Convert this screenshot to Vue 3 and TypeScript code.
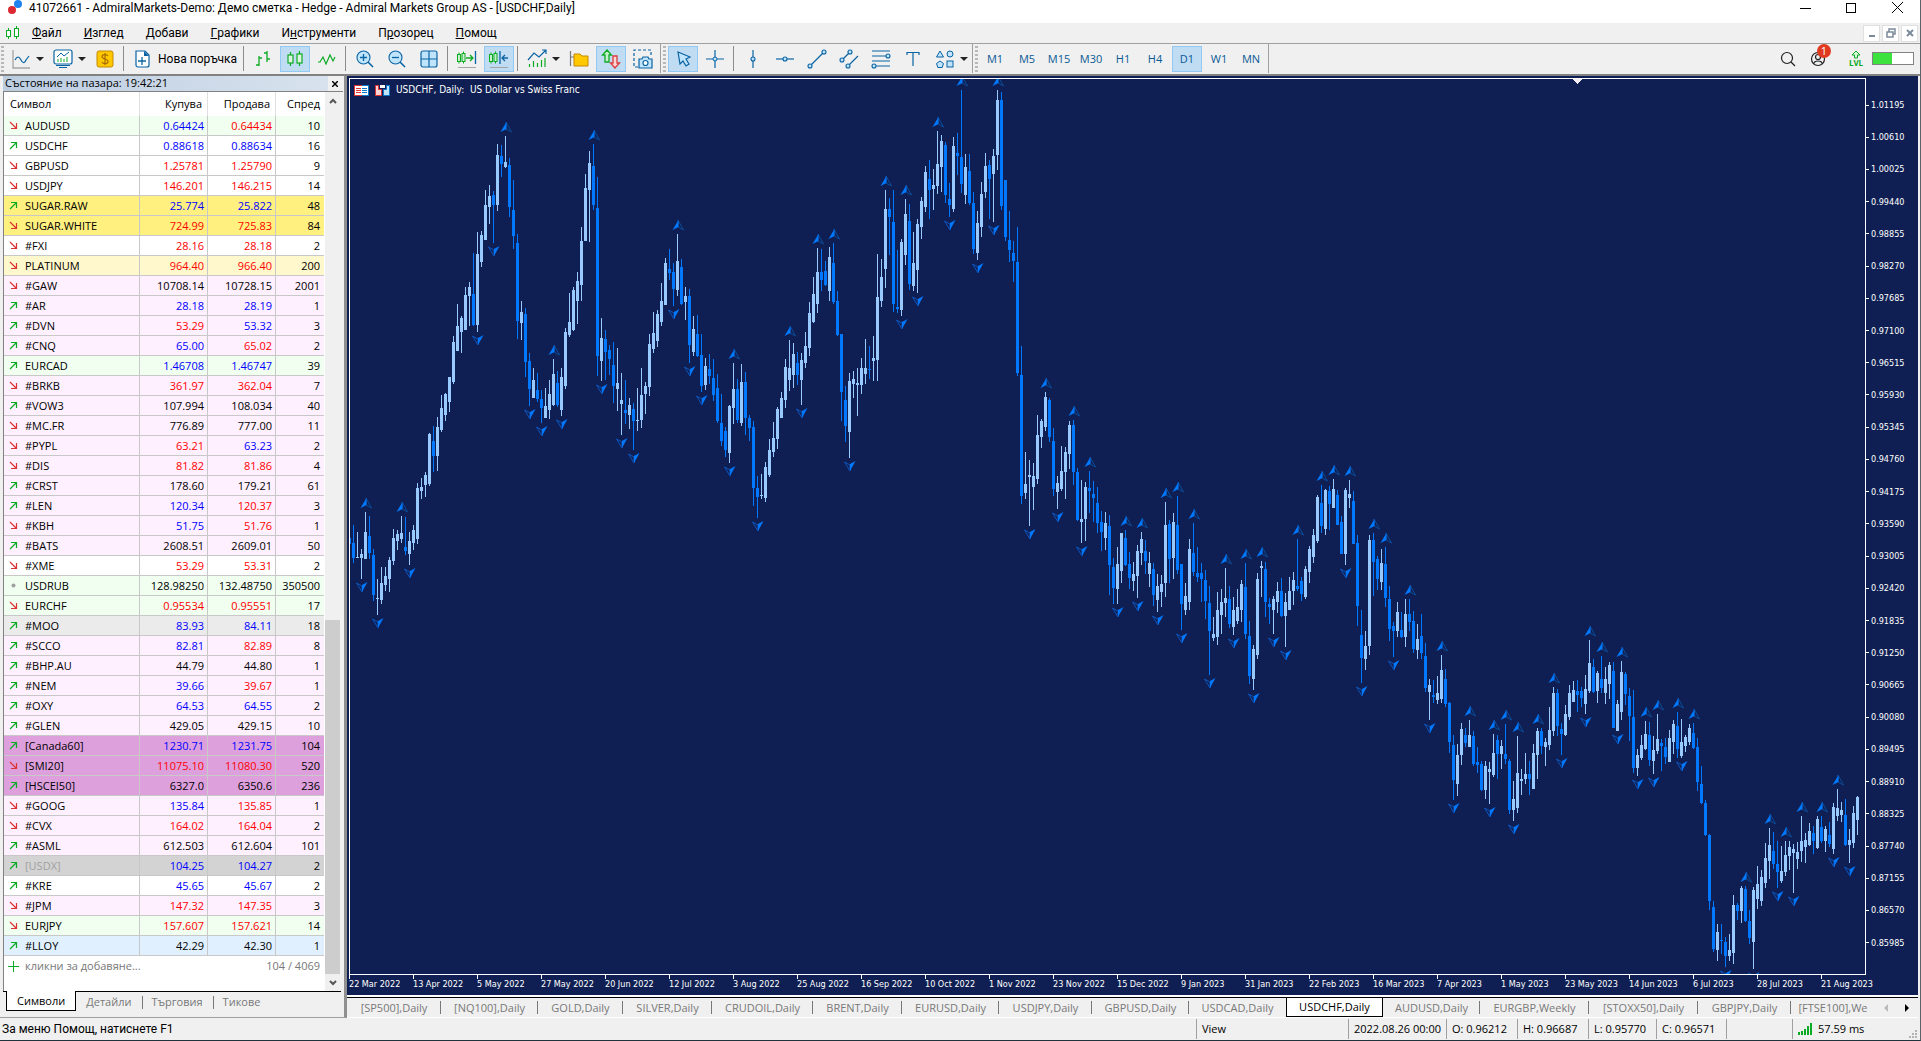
<script setup lang="ts">
type Trend = 'up' | 'down' | 'flat'
type Tone = 'b' | 'r' | 'k'

interface Quote {
  trend: Trend
  symbol: string
  bid: string
  ask: string
  tones: [Tone, Tone]
  spread: string
  bg: string
}

interface Bar {
  up: boolean
  high: number
  top: number
  bottom: number
  low: number
}

interface Tool {
  icon: string
  label: string
  caret?: boolean
  on?: boolean
  text?: string
}

const menus = [
  ['', 'Ф', 'айл'],
  ['', 'И', 'зглед'],
  ['', 'Д', 'обави'],
  ['', 'Г', 'рафики'],
  ['И', 'н', 'струменти'],
  ['П', 'р', 'озорец'],
  ['', 'П', 'омощ'],
]

const B = '#0a64a4'
const L = '#bfe4fb'
const G = '#0cab24'

const icons: Record<string, string> = {
  chart: `<path d="M2 1v18h17" fill="none" stroke="#a5a5a5" stroke-width="1.300"/><path d="M4 11c2-4 4-4 6 0s4 3 5 0l3-4" fill="none" stroke="${B}" stroke-width="1.200"/>`,
  profile: `<rect x="1" y="1" width="18" height="14" rx="2" fill="#fff" stroke="${B}" stroke-width="1.200"/><path d="M3 16.500h14M6 18.500h8" stroke="${B}" stroke-width="1.200"/><path d="M4 8l4-4 3 3 5-4" fill="none" stroke="${B}"/><path d="M5 13v-3M8 13V9M11 13v-3M14 13V8" stroke="${G}"/>`,
  dollar: `<rect x="2" y="2" width="16" height="16" rx="2" fill="#ffc800" stroke="#c48a00"/><path d="M13 7c-1-2-6-2-6 .6 0 3 6 1.800 6 4.800 0 2.800-5 3-6 .6M10 4v12" fill="none" stroke="#a86e00" stroke-width="1.200"/>`,
  order: `<path d="M4 2h9l4 4v10a2 2 0 0 1-2 2H6a2 2 0 0 1-2-2z" fill="#fff" stroke="${B}" stroke-width="1.200"/><path d="M12 2v5h5z" fill="${B}"/><path d="M6 12h8M10 8v8" stroke="${B}" stroke-width="1.300"/>`,
  bars: `<path d="M6 7v10M3 16h3M6 9h3M14 2v11M11 4h3M14 10h3" fill="none" stroke="${G}" stroke-width="1.300"/>`,
  candles: `<path d="M5.500 3v3M5.500 14v3M14.500 2v3M14.500 14v3" stroke="${G}" stroke-width="1.200"/><rect x="3" y="6" width="5" height="8" fill="#dff5df" stroke="${G}" stroke-width="1.200"/><rect x="12" y="5" width="5" height="9" fill="#dff5df" stroke="${G}" stroke-width="1.200"/>`,
  line: `<path d="M1 13h2l3-5 3 7 4-9 3 6 2-4" fill="none" stroke="${G}" stroke-width="1.200"/>`,
  zoomIn: `<path d="M13 13l5 5" stroke="${B}" stroke-width="1.600"/><circle cx="8.500" cy="8.500" r="6.500" fill="${L}" stroke="${B}" stroke-width="1.100"/><path d="M5 8.500h7M8.500 5v7" stroke="${B}" stroke-width="1.300"/>`,
  zoomOut: `<path d="M13 13l5 5" stroke="${B}" stroke-width="1.600"/><circle cx="8.500" cy="8.500" r="6.500" fill="${L}" stroke="${B}" stroke-width="1.100"/><path d="M5 8.500h7" stroke="${B}" stroke-width="1.300"/>`,
  grid: `<rect x="2" y="2" width="16" height="16" rx="2" fill="${L}" stroke="${B}" stroke-width="1.200"/><path d="M10 2v16M2 10h16" stroke="${B}" stroke-width="1.200"/>`,
  scroll: `<path d="M2 3.500v11M6.500 2.500v12" stroke="${G}"/><rect x="0.500" y="5.500" width="3" height="7" fill="#c9f0cd" stroke="${G}"/><rect x="5" y="4.500" width="3" height="8" fill="#c9f0cd" stroke="${G}"/><path d="M9 9h7M13 6l3 3-3 3" fill="none" stroke="${G}" stroke-width="1.300"/><path d="M18.500 2v13" stroke="${B}" stroke-width="1.300"/><path d="M1 18.500h18" stroke="#a5a5a5"/>`,
  shift: `<path d="M2 3.500v11M6.500 2.500v12" stroke="${G}"/><rect x="0.500" y="5.500" width="3" height="7" fill="#c9f0cd" stroke="${G}"/><rect x="5" y="4.500" width="3" height="8" fill="#c9f0cd" stroke="${G}"/><path d="M11 2v13M19 9h-6M16 6l-3 3 3 3" fill="none" stroke="${B}" stroke-width="1.300"/><path d="M1 18.500h18" stroke="#a5a5a5"/>`,
  indicators: `<path d="M1 11l6-7 5 4 7-7M15 1h4v4" fill="none" stroke="${B}" stroke-width="1.200"/><path d="M2.500 18v-3M6.500 18v-6M10.500 18v-4M14.500 18v-7M18 18v-9" stroke="${G}" stroke-width="1.200"/>`,
  folder: `<path d="M1.500 2v15M1.500 8h4" stroke="#777" stroke-width="1.200"/><path d="M5 5h6l2 2h6v10H5z" fill="#ffc800" stroke="#c48a00"/>`,
  trade: `<path d="M6 1l4.500 5H8v7H4V6H1.500z" fill="#c9f0cd" stroke="${G}" stroke-width="1.300"/><path d="M14 19l-4.500-5H12V7h4v7h2.500z" fill="#ffd4d2" stroke="#dc3c3c" stroke-width="1.300"/>`,
  camera: `<path d="M5 18H1V1h17v6" fill="none" stroke="${B}" stroke-width="1.200" stroke-dasharray="3 2"/><path d="M6 10h3l1-2h5l1 2h3v9H6z" fill="${L}" stroke="${B}" stroke-width="1.200"/><circle cx="12.500" cy="14" r="2.500" fill="#fff" stroke="${B}" stroke-width="1.200"/>`,
  cursor: `<path d="M5 3l12 5-4 2 3 5-3 2-3-5-3 3z" fill="${L}" stroke="${B}" stroke-width="1.200"/>`,
  cross: `<path d="M10 1v18M1 10h18" stroke="${B}" stroke-width="1.200"/><circle cx="10" cy="10" r="2" fill="${L}" stroke="${B}"/>`,
  vline: `<path d="M10 1v18" stroke="${B}" stroke-width="1.200"/><circle cx="10" cy="10" r="2" fill="${L}" stroke="${B}" stroke-width="1.100"/>`,
  hline: `<path d="M1 10h18" stroke="${B}" stroke-width="1.200"/><circle cx="10" cy="10" r="2" fill="${L}" stroke="${B}" stroke-width="1.100"/>`,
  trendline: `<path d="M3 17L17 3" stroke="${B}" stroke-width="1.200"/><circle cx="3" cy="17" r="2" fill="${L}" stroke="${B}" stroke-width="1.100"/><circle cx="17" cy="3" r="2" fill="${L}" stroke="${B}" stroke-width="1.100"/>`,
  channel: `<path d="M3 11l8-8M9 17L19 7" stroke="${B}" stroke-width="1.200"/><circle cx="3" cy="11" r="2" fill="${L}" stroke="${B}" stroke-width="1.100"/><circle cx="11" cy="3" r="2" fill="${L}" stroke="${B}" stroke-width="1.100"/><circle cx="9" cy="17" r="2" fill="${L}" stroke="${B}" stroke-width="1.100"/>`,
  fibo: `<path d="M1 2h18M1 7h14M1 12h18M5 17h14" stroke="${B}" stroke-width="1.200"/><circle cx="17" cy="7" r="2" fill="${L}" stroke="${B}" stroke-width="1.100"/><circle cx="3" cy="17" r="2" fill="${L}" stroke="${B}" stroke-width="1.100"/>`,
  label: `<path d="M4 6V3.500h12V6M10 4v13" fill="none" stroke="${B}" stroke-width="1.200"/>`,
  shapes: `<path d="M5 2l3.500 6h-7z" fill="${L}" stroke="${B}"/><circle cx="15" cy="5" r="3" fill="${L}" stroke="${B}"/><path d="M5 12l3.500 2.500-1.300 4H2.800l-1.300-4z" fill="${L}" stroke="${B}"/><rect x="12" y="12" width="6" height="6" fill="${L}" stroke="${B}"/>`,
}

const toolGroups: Tool[][] = [
  [
    { icon: 'chart', label: 'Нова графика', caret: true },
    { icon: 'profile', label: 'Профили', caret: true },
    { icon: 'dollar', label: 'Символи' },
  ],
  [{ icon: 'order', label: 'Нова поръчка', text: 'Нова поръчка' }],
  [
    { icon: 'bars', label: 'Барове' },
    { icon: 'candles', label: 'Свещи', on: true },
    { icon: 'line', label: 'Линия' },
  ],
  [
    { icon: 'zoomIn', label: 'Увеличи' },
    { icon: 'zoomOut', label: 'Намали' },
    { icon: 'grid', label: 'Подреди' },
  ],
  [
    { icon: 'scroll', label: 'Автопревъртане' },
    { icon: 'shift', label: 'Отместване', on: true },
  ],
  [
    { icon: 'indicators', label: 'Индикатори', caret: true },
    { icon: 'folder', label: 'Обекти' },
    { icon: 'trade', label: 'Търговия', on: true },
    { icon: 'camera', label: 'Снимка' },
  ],
]

const pointerTools: Tool[] = [
  { icon: 'cursor', label: 'Курсор', on: true },
  { icon: 'cross', label: 'Кръст' },
]

const drawTools: Tool[] = [
  { icon: 'vline', label: 'Вертикална линия' },
  { icon: 'hline', label: 'Хоризонтална линия' },
  { icon: 'trendline', label: 'Тренд' },
  { icon: 'channel', label: 'Канал' },
  { icon: 'fibo', label: 'Фибоначи' },
  { icon: 'label', label: 'Текст' },
  { icon: 'shapes', label: 'Фигури', caret: true },
]

const periods = ['M1', 'M5', 'M15', 'M30', 'H1', 'H4', 'D1', 'W1', 'MN']

const trendKey: Record<string, Trend> = { '+': 'up', '-': 'down', '.': 'flat' }

const quotes: Quote[] = `
- AUDUSD 0.64424 0.64434 br 10 mint
+ USDCHF 0.88618 0.88634 bb 16 white
- GBPUSD 1.25781 1.25790 rr 9 white
- USDJPY 146.201 146.215 rr 14 white
+ SUGAR.RAW 25.774 25.822 bb 48 yellow
- SUGAR.WHITE 724.99 725.83 rr 84 yellow
- #FXI 28.16 28.18 rr 2 white
- PLATINUM 964.40 966.40 rr 200 cream
- #GAW 10708.14 10728.15 kk 2001 pink
+ #AR 28.18 28.19 bb 1 pink
+ #DVN 53.29 53.32 rb 3 pink
+ #CNQ 65.00 65.02 br 2 pink
+ EURCAD 1.46708 1.46747 bb 39 mint
- #BRKB 361.97 362.04 rr 7 pink
+ #VOW3 107.994 108.034 kk 40 pink
- #MC.FR 776.89 777.00 kk 11 pink
- #PYPL 63.21 63.23 rb 2 pink
- #DIS 81.82 81.86 rr 4 pink
+ #CRST 178.60 179.21 kk 61 pink
+ #LEN 120.34 120.37 br 3 pink
- #KBH 51.75 51.76 br 1 pink
+ #BATS 2608.51 2609.01 kk 50 pink
- #XME 53.29 53.31 rr 2 white
. USDRUB 128.98250 132.48750 kk 350500 mint
- EURCHF 0.95534 0.95551 rr 17 mint
+ #MOO 83.93 84.11 bb 18 grey
+ #SCCO 82.81 82.89 br 8 pink
+ #BHP.AU 44.79 44.80 kk 1 pink
+ #NEM 39.66 39.67 br 1 pink
+ #OXY 64.53 64.55 bb 2 pink
+ #GLEN 429.05 429.15 kk 10 pink
+ [Canada60] 1230.71 1231.75 bb 104 plum
- [SMI20] 11075.10 11080.30 rr 520 plum
+ [HSCEI50] 6327.0 6350.6 kk 236 plum
- #GOOG 135.84 135.85 br 1 pink
- #CVX 164.02 164.04 rr 2 pink
+ #ASML 612.503 612.604 kk 101 pink
+ [USDX] 104.25 104.27 bb 2 silver
+ #KRE 45.65 45.67 bb 2 white
- #JPM 147.32 147.35 rr 3 pink
- EURJPY 157.607 157.621 rr 14 mint
+ #LLOY 42.29 42.30 kk 1 sky`
  .trim()
  .split('\n')
  .map((line) => {
    const [t, symbol, bid, ask, tones, spread, bg] = line.split(' ')
    return { trend: trendKey[t], symbol, bid, ask, tones: [tones[0], tones[1]] as [Tone, Tone], spread, bg }
  })

const panelTabs = ['Символи', 'Детайли', 'Търговия', 'Тикове']

const chartTabs: [string, number][] = [
  ['[SP500],Daily', 94],
  ['[NQ100],Daily', 97],
  ['GOLD,Daily', 85],
  ['SILVER,Daily', 89],
  ['CRUDOIL,Daily', 101],
  ['BRENT,Daily', 89],
  ['EURUSD,Daily', 97],
  ['USDJPY,Daily', 93],
  ['GBPUSD,Daily', 97],
  ['USDCAD,Daily', 97],
  ['USDCHF,Daily', 97],
  ['AUDUSD,Daily', 97],
  ['EURGBP,Weekly', 109],
  ['[STOXX50],Daily', 109],
  ['GBPJPY,Daily', 93],
  ['[FTSE100],We', 84],
]

const prices = Array.from({ length: 27 }, (_, i) => ((101195 - i * 585) / 100000).toFixed(5))

const dates = [
  '22 Mar 2022', '13 Apr 2022', '5 May 2022', '27 May 2022', '20 Jun 2022', '12 Jul 2022',
  '3 Aug 2022', '25 Aug 2022', '16 Sep 2022', '10 Oct 2022', '1 Nov 2022', '23 Nov 2022',
  '15 Dec 2022', '9 Jan 2023', '31 Jan 2023', '22 Feb 2023', '16 Mar 2023', '7 Apr 2023',
  '1 May 2023', '23 May 2023', '14 Jun 2023', '6 Jul 2023', '28 Jul 2023', '21 Aug 2023',
]

const statusCells: [string, number][] = [
  ['View', 152],
  ['2022.08.26 00:00', 98],
  ['O: 0.96212', 71],
  ['H: 0.96687', 71],
  ['L: 0.95770', 68],
  ['C: 0.96571', 70],
  ['', 66],
]

// Each block: base offset, units per pixel, then bars as direction, high, body top, body bottom, low.
const history: [number, number, string][] = [
  [-9, 2.8, `d 1310 1310 1326 1326/d 1274 1324 1366 1380/u 1294 1364 1367 1367/u 1341 1355 1366 1425/u 1238 1294 1369 1369/d 1249 1305 1352 1369/d 1341 1358 1470 1487/u 1425 1478 1481 1526/u 1392 1436 1484 1495/u 1392 1417 1442 1459/u 1364 1372 1425 1462/u 1285 1310 1375 1386/u 1288 1299 1319 1344/u 1249 1296 1313 1325/d 1252 1336 1347 1358/u 1294 1319 1355 1386/u 1274 1288 1324 1343/u 1157 1170 1313 1327/u 1142 1168 1179 1201/u 1126 1134 1162 1196/u 1016 1019 1159 1165/d 997 1039 1081 1126/u 972 1000 1081 1123/u 910 946 1008 1014/u 904 907 966 983/u 860 860 930 958/u 745 762 874 880/u 655 717 787 787/u 689 694 734 792/u 608 630 728 728/u 594 608 633 717/d 512 627 714 717/u 454 515 714 734/u 451 462 538 552/u 336 378 476 476/u 322 353 384 431/d 339 350 378 484/u 207 238 378 395/d 210 241 263 300/u 185 258 272 274/d 246 266 384 412/d 308 392 465 501/d 459 484 703 753/u 647 678 708 756/d 666 683 818 860/d 792 815 893 941/u 834 868 918 918/d 848 896 921 930/d 896 921 946 988/u 890 941 974 974/u 868 907 952 977/u 809 851 938 941/d 843 876 938 943/u 834 860 952 969/u 722 734 885 893/u 624 706 742 748/u 608 616 728 731/u 566 591 647 711/u 440 479 602 647/u 291 330 479 479/u 227 260 336 482/d 207 269 378 392/d 300 386 801 857/u 694 750 815 871/d 728 753 790 868/d 770 784 809 854/d 762 826 885 932/u 778 876 893 955/u 848 924 935 1022/d 868 952 960 991/u 918 938 966 1005/d 932 949 983 1064/u 890 980 983 1011/u 834 910 980 1002/u 874 885 907 963/u 739 767 888 913/u 678 736 781 792/u 672 683 759 776/u 596 647 706 717/u 526 540 658 658/d 501 557 568 588/d 540 566 613 661/u 459 535 616 633/d 529 552 655 658/u 608 633 650 700/d 613 633 770 820/u 689 725 790 801/d 686 739 801 804/d 739 798 885 902/u 806 829 882 896/d 795 837 857 879/d 809 862 910 927/d 851 890 983 988/d 907 988 1039 1053/d 1000 1011 1064 1084/u 938 941 1072 1100/u 820 893 946 991/d 865 893 980 988`],
  [-9, 3, `u 882 936 1058 1068/d 906 936 1044 1095/d 1035 1044 1074 1113/d 1053 1071 1254 1308/d 1218 1254 1281 1344/u 1212 1275 1278 1287/u 1176 1191 1284 1296/u 1107 1140 1215 1221/u 1056 1104 1146 1161/u 1011 1017 1107 1137/u 966 984 1044 1044/u 867 891 990 1014/u 810 894 930 963/u 819 852 915 954/d 846 879 915 945/u 849 870 930 1005/u 786 828 879 894/u 696 729 834 858/u 621 672 756 759/u 534 606 702 729/d 537 606 630 663/d 573 603 645 648/u 531 561 663 693/d 519 579 696 702/d 663 693 795 798/d 792 792 966 1053/d 948 990 1068 1116/u 909 933 1086 1164/u 903 927 942 984/u 894 939 945 1038/u 864 894 945 972/u 807 894 912 942/d 828 897 900 927/u 798 864 873 933/u 552 681 870 932/u 567 621 693 711/u 360 417 597 654/d 384 417 441 555/d 361 456 702 726/d 540 711 717 729/u 507 516 720 738/u 387 432 555 585/d 402 453 642 660/u 486 579 648 663/u 447 462 600 669/u 381 393 471 507/u 288 306 411 426/d 270 327 360 447/u 297 345 357 420/u 183 282 348 372/u 195 213 291 366/d 216 225 375 399/d 339 387 405 441/u 201 228 417 426/d 189 249 258 315/d 60 261 342 369/u 252 291 375 402/d 252 303 399 405/d 366 399 537 552/u 423 459 549 570/u 336 372 471 501/u 249 288 366 384/d 270 285 327 447/u 237 258 312 456/u 60 90 255 300/d 66 90 408 420/d 330 330 501 513/d 423 510 540 576/d 513 549 573 636/d 471 576 909 918/d 828 915 1278 1302`],
  [291, 3, `u 246 342 369 387/u 270 315 321 468/u 279 318 351 420/u 135 195 327 342/u 147 153 201 234/u 66 81 171 183/d 84 90 201 216/d 174 213 357 378/u 318 339 366 417/u 228 303 357 363/u 231 246 306 387/u 153 165 252 297/d 150 165 306 345/d 294 306 450 453/u 330 447 456 519/u 336 351 447 513/d 303 354 363 429/d 333 372 384 456/d 351 399 459 489/d 423 456 486 543/u 426 459 504 540/d 435 468 585 675/d 564 591 654 702/u 531 582 657 702/u 489 489 603 639/d 480 504 585 588/d 546 582 624 657/u 576 612 633 663/u 525 543 618 684/u 486 507 549 585/d 510 543 573 612/u 546 579 612 651/d 579 597 675 708/u 612 648 690 726/u 615 642 666 711/u 396 465 639 681/d 450 462 567 639/u 429 456 564 627/d 378 465 600 612/d 582 582 702 780/u 639 678 720 735/u 507 537 696 720/d 459 549 606 618/d 531 609 621 636/d 579 609 627 696/d 600 630 693 747/d 648 699 783 915/u 741 792 804 813/u 666 720 801 825/u 657 696 735 792/u 594 684 699 741/d 648 687 762 774/u 681 720 771 795/u 657 711 753 762/u 630 642 720 756/d 579 651 792 807/d 753 798 918 942/u 825 837 927 960/u 609 627 855 867/u 573 588 594 681/d 576 597 696 741/d 684 702 711 762/u 678 687 720 792/u 636 663 696 729/d 624 663 738 741/u 669 696 738 831/u 621 663 720 720/u 606 630 663 705/d 507 648 657 663/d 621 633 672 693/u 588 597 681 687/u 528 537 606 639/u 477 495 561 579/u 375 381 513 519/d 345 399 468 489/u 357 360 477 495/d 348 363 402 480/u 327 357 414 414/d 360 375 465 465/d 438 456 552 552/u 354 360 552 585/u 330 372 384 414/d 363 393 522 522/d 495 519 708 768/d 720 795 864 939/u 783 828 867 900/u 495 510 828 855/d 489 510 576 678/d 558 567 627 660/u 537 579 636 660/d 531 582 684 711/d 648 687 777 813/d 756 768 783 861/u 696 726 783 801/d 726 780 801 804/u 687 732 801 831/d 687 732 756 783/d 723 753 837 849/u 762 807 840 867/d 732 798 849 867/d 819 858 954 966`],
  [481, 3, `u 357 375 396 480/d 360 405 411 429/u 348 399 420 432/u 285 330 417 429/d 327 357 432 441/d 426 429 546 579/d 525 555 660 720/u 552 585 672 708/u 489 507 585 615/d 504 525 549 561/u 480 525 561 561/d 513 528 612 618/d 561 606 615 639/d 603 612 690 693/u 603 618 690 717/u 606 627 636 732/u 522 579 645 651/d 525 540 582 657/u 540 558 582 627/d 492 582 597 612/d 597 603 750 762/u 663 717 750 783/u 528 639 744 759/u 627 657 663 705/u 579 642 657 672/d 603 642 657 704/u 552 579 687 687/u 504 513 585 657/d 505 513 558 582/u 534 546 561 618/u 441 510 555 570/u 381 399 513 528/d 387 399 498 528/d 489 507 522 585/u 435 462 525 528/u 375 399 471 480/u 363 390 426 426/d 360 393 405 456/d 381 393 414 441/u 345 387 432 462/u 240 309 393 399/d 297 321 396 399/u 333 339 393 429/d 288 357 384 399/u 321 357 399 432/u 306 315 372 417/d 306 333 504 504/u 420 432 513 513/u 303 336 456 480/d 336 342 402 435/d 384 408 468 543/d 390 471 624 639/u 567 585 624 648/u 525 555 594 600/u 483 522 567 570/d 486 525 600 618/u 528 570 603 642/u 462 537 573 582/d 537 549 558 633/d 534 561 591 612/u 510 534 606 606/u 480 492 546 582/d 456 498 567 594/u 477 546 588 594/u 525 531 558 576/u 492 504 546 555/d 489 519 564 567/d 534 561 666 693/d 618 672 729 732/d 720 729 825 828/d 822 825 1023 1050/d 1023 1041 1167 1176/u 1092 1116 1170 1203/d 1092 1140 1143 1182/d 1131 1146 1188 1221/u 1122 1170 1188 1203/u 1005 1035 1179 1212/d 1029 1035 1053 1080/u 978 984 1053 1089/d 978 987 1083 1086/d 1050 1083 1134 1152/u 981 990 1146 1227/u 918 972 1017 1047/u 930 951 1023 1038/u 849 894 969 984/u 804 855 903 957/d 816 873 912 927/d 843 912 936 984/u 858 933 963 969/u 843 885 936 948/u 844 861 888 930/u 852 867 879 999/u 846 876 897 927/u 768 843 873 906/u 819 840 861 909/u 789 813 855 858/d 798 819 843 882/u 768 777 864 867/d 768 801 843 849/u 798 807 843 876/d 786 825 852 861/u 729 741 867 882/u 687 744 768 783/u 726 750 765 786/d 717 765 855 858/u 807 840 855 909/u 738 759 849 864/u 708 711 780 825`],
]

const bars: Bar[] = history.flatMap(([base, unit, rows]) =>
  rows.split('/').map((row) => {
    const [dir, ...v] = row.split(' ')
    const [high, top, bottom, low] = v.map((n) => base + Number(n) / unit)
    return { up: dir === 'u', high, top, bottom, low }
  }),
)

const barX = (i: number) => i * 4 - 1

function candlePath(up: boolean): string {
  return bars
    .map((b, i) => {
      if (b.up !== up) return ''
      const x = barX(i)
      const [h, t, c, l] = [b.high, b.top, b.bottom, b.low].map(Math.round)
      return `M${x} ${h}h1V${l}h-1zM${x - 1} ${t}h3V${Math.max(c, t + 1)}h-3z`
    })
    .join('')
}

const upCandles = candlePath(true)
const downCandles = candlePath(false)

// Bill Williams fractals: an extreme against two bars on either side.
const inner = bars.map((_, i) => i).slice(2, -2)
const peaks = inner
  .filter((i) => {
    const h = bars[i].high
    return h <= bars[i - 1].high && h <= bars[i - 2].high && h < bars[i + 1].high && h < bars[i + 2].high
  })
  .map((i) => ({ x: barX(i) + 1, y: Math.round(bars[i].high) - 14 }))
const troughs = inner
  .filter((i) => {
    const l = bars[i].low
    return l >= bars[i - 1].low && l >= bars[i - 2].low && l > bars[i + 1].low && l > bars[i + 2].low
  })
  .map((i) => ({ x: barX(i) + 1, y: Math.round(bars[i].low) + 13 }))
</script>

<template>
  <div class="app">
    <header class="titlebar">
      <svg class="logo" width="16" height="16" viewBox="0 0 16 16" aria-hidden="true">
        <circle cx="11" cy="4" r="4" fill="#1e82f0" />
        <circle cx="5" cy="10" r="4" fill="#dc2832" />
      </svg>
      <h1>41072661 - AdmiralMarkets-Demo: Демо сметка - Hedge - Admiral Markets Group AS - [USDCHF,Daily]</h1>
      <div class="window-buttons">
        <button aria-label="Намали"><svg width="11" height="11"><path d="M0 6.500h11" stroke="#000" /></svg></button>
        <button aria-label="Възстанови"><svg width="11" height="11"><rect x="0.500" y="1.500" width="9" height="9" fill="none" stroke="#000" /></svg></button>
        <button aria-label="Затвори"><svg width="11" height="11"><path d="M0 0l11 11M11 0L0 11" stroke="#000" /></svg></button>
      </div>
    </header>

    <nav class="menubar">
      <svg width="20" height="20" viewBox="0 0 20 20" aria-hidden="true">
        <path d="M5.500 5v11M13.500 3v13" stroke="#0cab24" />
        <rect x="3.500" y="7.500" width="4" height="6" fill="#fff" stroke="#0cab24" />
        <rect x="11.500" y="5.500" width="4" height="8" fill="#fff" stroke="#0cab24" />
      </svg>
      <button v-for="m in menus" :key="m.join('')" class="menu">{{ m[0] }}<u>{{ m[1] }}</u>{{ m[2] }}</button>
      <div class="child-buttons">
        <button aria-label="Намали графика"><svg width="10" height="10"><path d="M2 8h6" stroke="#7b8a9a" stroke-width="2" /></svg></button>
        <button aria-label="Възстанови графика"><svg width="10" height="10"><path d="M1 4h6v5H1zM3 4V1h6v5H7" fill="none" stroke="#7b8a9a" stroke-width="1.500" /></svg></button>
        <button aria-label="Затвори графика"><svg width="10" height="10"><path d="M2 2l6 6M8 2L2 8" stroke="#7b8a9a" stroke-width="2" /></svg></button>
      </div>
    </nav>

    <div class="toolbar">
      <i class="grip"></i>
      <template v-for="(group, g) in toolGroups" :key="g">
        <i v-if="g" class="sep"></i>
        <div v-for="t in group" :key="t.icon" class="split">
          <button class="tool" :class="{ on: t.on, wide: t.text }" :aria-label="t.label">
            <svg width="20" height="20" viewBox="0 0 20 20" v-html="icons[t.icon]"></svg>
            <span v-if="t.text">{{ t.text }}</span>
          </button>
          <button v-if="t.caret" class="caret" :aria-label="t.label + ' – меню'"></button>
        </div>
      </template>
      <i class="edge"></i>
      <i class="grip"></i>
      <button v-for="t in pointerTools" :key="t.icon" class="tool" :class="{ on: t.on }" :aria-label="t.label">
        <svg width="20" height="20" viewBox="0 0 20 20" v-html="icons[t.icon]"></svg>
      </button>
      <i class="sep"></i>
      <div v-for="t in drawTools" :key="t.icon" class="split">
        <button class="tool" :aria-label="t.label">
          <svg width="20" height="20" viewBox="0 0 20 20" v-html="icons[t.icon]"></svg>
        </button>
        <button v-if="t.caret" class="caret" :aria-label="t.label + ' – меню'"></button>
      </div>
      <i class="edge"></i>
      <i class="grip"></i>
      <button v-for="p in periods" :key="p" class="tool period" :class="{ on: p === 'D1' }">{{ p }}</button>
      <i class="edge"></i>
      <div class="toolbar-right">
        <button class="plain" aria-label="Търсене">
          <svg width="16" height="16" viewBox="0 0 16 16"><circle cx="7" cy="7" r="5.500" fill="none" stroke="#222" stroke-width="1.200" /><path d="M11 11l4 4" stroke="#222" stroke-width="1.200" /></svg>
        </button>
        <button class="plain account" aria-label="Акаунт">
          <svg width="16" height="16" viewBox="0 0 16 16" fill="none" stroke="#222" stroke-width="1.200"><circle cx="8" cy="8" r="6.500" /><circle cx="8" cy="6" r="2.500" /><path d="M3.500 13c1-4 8-4 9 0" /></svg>
          <span class="badge">1</span>
        </button>
        <button class="plain level" aria-label="Ниво">
          <svg width="12" height="9" viewBox="0 0 12 9"><path d="M6 1l4 4H7.500v3h-3V5H2z" fill="#d8f5dc" stroke="#0cab24" /></svg>
          <span>LVL</span>
        </button>
        <div class="battery"><i></i></div>
      </div>
    </div>

    <main class="workspace">
      <section class="panel">
        <div class="panel-title">
          <h2>Състояние на пазара: 19:42:21</h2>
          <button class="close" aria-label="Затвори панела"><svg width="6" height="6"><path d="M0 0l6 6M6 0L0 6" stroke="#000" stroke-width="1.500" /></svg></button>
        </div>
        <div class="panel-body">
          <div class="list">
            <table>
              <colgroup><col class="c-sym" /><col class="c-num" /><col class="c-num" /><col class="c-spr" /></colgroup>
              <thead>
                <tr><th>Символ</th><th>Купува</th><th>Продава</th><th>Спред</th></tr>
              </thead>
              <tbody>
                <tr v-for="q in quotes" :key="q.symbol" :class="q.bg">
                  <td>
                    <span class="sym">
                      <svg width="9" height="9" viewBox="0 0 9 9" fill="none" stroke-width="1.200">
                        <path v-if="q.trend === 'up'" d="M1 8l6.500-6.500M2 1.500h5.500V7" stroke="#0cab24" />
                        <path v-else-if="q.trend === 'down'" d="M1 1l6.500 6.500M2 7.500h5.500V2" stroke="#dc3232" />
                        <circle v-else cx="4.500" cy="4.500" r="2" fill="#a0a0a0" />
                      </svg>
                      {{ q.symbol }}
                    </span>
                  </td>
                  <td :class="q.tones[0]">{{ q.bid }}</td>
                  <td :class="q.tones[1]">{{ q.ask }}</td>
                  <td>{{ q.spread }}</td>
                </tr>
              </tbody>
            </table>
            <div class="add-row">
              <svg width="11" height="11" viewBox="0 0 11 11"><path d="M5.500 0v11M0 5.500h11" stroke="#0cab24" /></svg>
              <span>кликни за добавяне...</span>
              <span class="count">104 / 4069</span>
            </div>
          </div>
          <div class="scroll">
            <button aria-label="Нагоре"><svg width="8" height="6"><path d="M1 5l3-3 3 3" fill="none" stroke="#555" stroke-width="2" /></svg></button>
            <i class="thumb"></i>
            <button aria-label="Надолу"><svg width="8" height="6"><path d="M1 1l3 3 3-3" fill="none" stroke="#555" stroke-width="2" /></svg></button>
          </div>
        </div>
        <div class="panel-tabs">
          <button v-for="(t, i) in panelTabs" :key="t" :class="{ active: i === 0 }">{{ t }}</button>
        </div>
      </section>

      <section class="chart">
        <div class="pane">
          <div class="plot">
            <svg class="canvas" shape-rendering="crispEdges" role="img" aria-label="USDCHF, Daily">
              <path d="M1222 0h10l-5 5z" fill="#f4eef4" />
              <path :d="downCandles" fill="#0078ff" />
              <path :d="upCandles" fill="#99caff" />
              <g shape-rendering="auto">
                <g v-for="p in peaks" :key="'p' + p.x" :transform="`translate(${p.x} ${p.y})`">
                  <path d="M0 0L5.500 10L0 7z" fill="#102055" stroke="#0b4b96" stroke-width="1" />
                  <path d="M0.500 0L-5.500 10L0.500 7z" fill="#0078ff" />
                </g>
                <g v-for="p in troughs" :key="'t' + p.x" :transform="`translate(${p.x} ${p.y})`">
                  <path d="M0 0L-5.500 -9L0 -6z" fill="#102055" stroke="#0b55be" stroke-width="1" />
                  <path d="M0 0L5.500 -10L0 -7z" fill="#0078ff" />
                </g>
              </g>
            </svg>
            <div class="caption">
              <svg width="15" height="11" viewBox="0 0 15 11">
                <rect width="8" height="11" fill="#dc3232" /><rect x="8" width="7" height="11" fill="#0a78c8" />
                <path d="M1 1h13v9H1z" fill="#fff" />
                <path d="M2 3.500h5M2 5.500h5M2 7.500h5" stroke="#dc3232" /><path d="M8 3.500h5M8 5.500h5M8 7.500h5" stroke="#0a78c8" />
              </svg>
              <svg width="15" height="11" viewBox="0 0 15 11">
                <path d="M.5.500h3v4h3v6h-6z" fill="#ffd4d2" stroke="#dc3232" /><path d="M14.500.500h-3v4h-3v6h6z" fill="#bfe4fb" stroke="#0a78c8" />
                <path d="M5 0h5v3H5z" fill="#fff" />
              </svg>
              <span>USDCHF, Daily:&nbsp; US Dollar vs Swiss Franc</span>
            </div>
          </div>
          <div class="prices"><span v-for="p in prices" :key="p">{{ p }}</span></div>
          <div class="dates"><span v-for="d in dates" :key="d">{{ d }}</span></div>
        </div>
        <div class="chart-tabs">
          <div class="strip">
            <button
              v-for="[name, width] in chartTabs"
              :key="name"
              :class="{ active: name === 'USDCHF,Daily', before: name === 'USDCAD,Daily' }"
              :style="{ width: width + 'px' }"
            >{{ name }}</button>
          </div>
          <button class="nav off" aria-label="Предишни"><svg width="5" height="8"><path d="M4 0v8L0 4z" fill="#bbb" /></svg></button>
          <button class="nav" aria-label="Следващи"><svg width="5" height="8"><path d="M0 0v8l4-4z" fill="#000" /></svg></button>
        </div>
      </section>
    </main>

    <footer class="status">
      <span class="hint">За меню Помощ, натиснете F1</span>
      <span v-for="[text, width] in statusCells" :key="text" class="cell" :style="{ width: width + 'px' }">{{ text }}</span>
      <span class="cell ping">
        <svg width="15" height="12"><path d="M1 12V9M4 12V8M7 12V6M10 12V3M13 12V0" stroke="#0cab24" stroke-width="2" /></svg>
        57.59 ms
      </span>
      <svg class="resize" width="10" height="10"><path d="M7 1h2M4 4h2M7 4h2M1 7h2M4 7h2M7 7h2" stroke="#b4b4b4" stroke-width="2" /></svg>
    </footer>
  </div>
</template>

<style>
body {
  margin: 0;
}
</style>

<style scoped>
.app {
  box-sizing: border-box;
  display: flex;
  flex-direction: column;
  min-height: 100vh;
  overflow: hidden;
  background: #f0f0f0;
  border-right: 1px solid #5a6468;
  border-bottom: 1px solid #20323c;
  color: #000;
  font: 11px/16px "Open Sans", "Noto Sans", sans-serif;
}
h1,
h2 {
  margin: 0;
  font: inherit;
}
button {
  display: flex;
  align-items: center;
  justify-content: center;
  padding: 0;
  border: 0;
  background: none;
  color: inherit;
  font: inherit;
  white-space: nowrap;
}
svg {
  display: block;
  flex: none;
}
.titlebar {
  display: flex;
  height: 23px;
  background: #fff;
  padding-left: 7px;
}
.titlebar h1 {
  margin-left: 6px;
  font: 12px/16px Roboto, "Noto Sans", sans-serif;
}
.window-buttons {
  display: flex;
  margin-left: auto;
}
.window-buttons button {
  width: 46px;
  height: 14px;
}
.menubar {
  display: flex;
  align-items: center;
  height: 20px;
  padding-left: 3px;
  border-bottom: 1px solid #a0a0a0;
}
.menubar > svg {
  margin-right: 9px;
}
.menu {
  margin-right: 22px;
  font: 12px/16px Roboto, "Noto Sans", sans-serif;
}
.child-buttons {
  display: flex;
  gap: 2px;
  margin-left: auto;
  padding-right: 2px;
}
.child-buttons button {
  width: 17px;
  height: 17px;
  background: #fff;
  border: 1px solid #e0e0e0;
  box-sizing: border-box;
}
.toolbar {
  display: flex;
  align-items: center;
  gap: 2px;
  height: 29px;
  padding: 0 6px 1px 1px;
  border-bottom: 2px solid #828282;
}
.grip {
  width: 3px;
  height: 26px;
  background: repeating-linear-gradient(#b8b8b8 0 2px, transparent 2px 4px);
}
.sep {
  width: 1px;
  height: 25px;
  margin: 0 2px 0 1px;
  background: #8c8c8c;
}
.edge {
  width: 1px;
  height: 29px;
  background: #a0a0a0;
}
.split {
  display: flex;
}
.tool {
  box-sizing: border-box;
  flex: none;
  width: 30px;
  height: 26px;
  border: 1px solid transparent;
}
.tool.on {
  background: #c0dcf3;
  border-color: #90c8f6;
}
.tool.wide {
  justify-content: flex-start;
  gap: 6px;
  width: 112px;
  padding-left: 3px;
}
.tool.wide span {
  font: 12px/16px Roboto, "Noto Sans", sans-serif;
}
.period {
  color: #0a5a96;
}
.caret {
  width: 10px;
  height: 26px;
  justify-content: flex-start;
}
.caret::before {
  content: "";
  border: 4px solid transparent;
  border-top-color: #222;
  border-bottom: 0;
}
.toolbar-right {
  display: flex;
  align-items: center;
  gap: 14px;
  margin-left: auto;
}
.plain {
  width: 16px;
  height: 26px;
}
.account {
  position: relative;
  margin-right: 8px;
}
.badge {
  position: absolute;
  left: 7px;
  top: -2px;
  width: 14px;
  height: 14px;
  border-radius: 7px;
  background: #e03a20;
  color: #fff;
  font-size: 11px;
  line-height: 14px;
}
.level {
  flex-direction: column;
  color: #0cab24;
  font-size: 8px;
  line-height: 8px;
  font-weight: 700;
}
.battery {
  box-sizing: border-box;
  width: 42px;
  height: 13px;
  margin-left: -6px;
  border: 1px solid #828282;
  background: #fff;
}
.battery i {
  display: block;
  width: 19px;
  height: 11px;
  background: #3ee23e;
}
.workspace {
  display: flex;
  flex: 1;
  min-width: 0;
}
.panel {
  box-sizing: border-box;
  display: flex;
  flex: none;
  flex-direction: column;
  width: 347px;
  padding-left: 3px;
  border-right: 3px solid #909090;
  border-bottom: 1px solid #a0a0a0;
}
.panel-title {
  display: flex;
  height: 15px;
  margin-right: 3px;
}
.panel-title h2 {
  width: 325px;
  background: linear-gradient(90deg, #bccde0, #d8e2ee);
  padding-left: 2px;
  line-height: 14px;
  box-sizing: border-box;
}
.close {
  flex: 1;
}
.panel-body {
  display: flex;
  flex: 1;
  margin-right: 1px;
  border-top: 1px solid #828282;
  border-left: 1px solid #828282;
}
.list {
  width: 321px;
  background: #fff;
}
table {
  width: 320px;
  table-layout: fixed;
  border-collapse: separate;
  border-spacing: 0;
  line-height: 18px;
}
.c-sym {
  width: 136px;
}
.c-num {
  width: 68px;
}
.c-spr {
  width: 48px;
}
th,
td {
  box-sizing: border-box;
  height: 20px;
  padding: 0 3px 0 0;
  border-right: 1px solid #c8c8c8;
  border-bottom: 1px solid #c8c8c8;
  text-align: right;
  font-weight: 400;
}
td:last-child,
th:last-child {
  border-right: 0;
  padding-right: 4px;
}
th {
  height: 24px;
  padding-right: 5px;
  border-color: #e0e0e0;
  border-bottom: 0;
}
th:first-child {
  text-align: left;
  padding-left: 6px;
}
.sym {
  display: flex;
  align-items: center;
  gap: 7px;
  padding-left: 5px;
}
.mint { background: #f0fff0; }
.white { background: #fff; }
.yellow { background: #fff080; }
.cream { background: #fff8cc; }
.pink { background: #fff0ff; }
.grey { background: #ebebeb; }
.plum { background: #dda0dd; }
.silver { background: #d3d3d3; }
.sky { background: #e0f0ff; }
.silver .sym { color: #a0a0a0; }
.b { color: #00f; }
.r { color: #f00; }
.add-row {
  display: flex;
  align-items: center;
  gap: 6px;
  height: 20px;
  padding: 0 5px 0 4px;
  color: #787878;
}
.count {
  margin-left: auto;
}
.scroll {
  display: flex;
  flex-direction: column;
  width: 15px;
}
.scroll button {
  height: 17px;
}
.thumb {
  height: 354px;
  margin-top: auto;
  background: #cdcdcd;
}
.panel-tabs {
  display: flex;
  height: 25px;
  margin-right: 3px;
  border-top: 1px solid #000;
  color: #787878;
}
.panel-tabs button {
  height: 20px;
  padding: 0 10px;
  position: relative;
}
.panel-tabs button + button + button::before {
  content: "";
  position: absolute;
  left: 0;
  top: 4px;
  height: 13px;
  border-left: 1px solid #787878;
}
.panel-tabs .active {
  margin: -1px 0 0 3px;
  border: 1px solid #000;
  border-top: 0;
  background: #fff;
  color: #000;
}
.chart {
  display: flex;
  flex: 1;
  flex-direction: column;
  min-width: 0;
  padding-right: 2px;
}
.pane {
  display: grid;
  flex: 1;
  grid-template: 1fr 20px / 1fr 52px;
  padding: 2px 0 0 2px;
  background: #101f53;
  border-bottom: 2px solid #fff;
  color: #fff;
  font: 9px/12px "DejaVu Sans Condensed", "DejaVu Sans", sans-serif;
}
.plot {
  position: relative;
  border: 1px solid #fff;
  min-width: 0;
}
.canvas {
  position: absolute;
  inset: 0;
  width: 100%;
  height: 100%;
}
.caption {
  position: relative;
  display: flex;
  align-items: center;
  gap: 6px;
  padding: 5px 4px;
  font-size: 10px;
}
.prices {
  display: flex;
  flex-direction: column;
  justify-content: space-between;
  padding: 21px 0 26px;
}
.prices span {
  display: flex;
  align-items: center;
  gap: 2px;
}
.prices span::before {
  content: "";
  width: 3px;
  height: 1px;
  background: #fff;
}
.dates {
  grid-column: 1 / -1;
  display: flex;
  overflow: hidden;
}
.dates span {
  flex: none;
  width: 64px;
  padding-top: 3px;
  background: linear-gradient(#fff, #fff) 0 0 / 1px 4px no-repeat;
  white-space: nowrap;
}
.chart-tabs {
  display: flex;
  height: 19px;
  border-top: 1px solid #000;
  border-bottom: 1px solid #fff;
  color: #787878;
}
.strip {
  display: flex;
  flex: 1;
  min-width: 0;
  overflow: hidden;
}
.strip button {
  position: relative;
  flex: none;
  height: 19px;
}
.strip button::after {
  content: "";
  position: absolute;
  right: 0;
  top: 3px;
  height: 13px;
  border-right: 1px solid #787878;
}
.strip .before::after,
.strip .active::after,
.strip button:last-child::after {
  border: 0;
}
.strip .active {
  box-sizing: border-box;
  border: 1px solid #000;
  border-top: 0;
  background: #fff;
  color: #000;
}
.nav {
  width: 21px;
}
.status {
  display: flex;
  align-items: center;
  height: 22px;
  font: 12px/16px Roboto, "Noto Sans", sans-serif;
}
.hint {
  flex: 1;
  padding-left: 2px;
}
.cell {
  box-sizing: border-box;
  flex: none;
  height: 20px;
  padding-left: 5px;
  border-left: 1px solid #a0a0a0;
  font: 11px/20px "Open Sans", "Noto Sans", sans-serif;
  white-space: nowrap;
}
.ping {
  display: flex;
  align-items: center;
  gap: 5px;
  width: 116px;
}
.resize {
  align-self: flex-end;
  margin-right: 2px;
}
</style>
